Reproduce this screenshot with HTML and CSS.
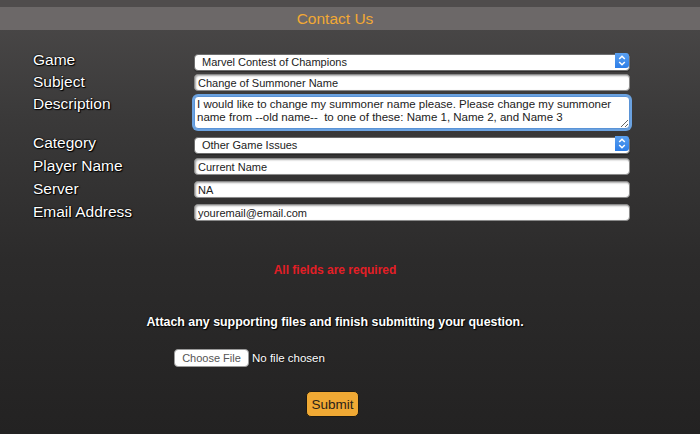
FILE: index.html
```html
<!DOCTYPE html>
<html lang="en">
<head>
    <meta charset="UTF-8">
    <title>Contact Us</title>
    <link rel="stylesheet" href="styles.css">
</head>
<body>
    <div class="top-band"></div>
    <h1 class="page-title">Contact Us</h1>

    <form class="contact-form">
        <div class="form-grid">
            <label class="field-label">Game</label>
            <div class="select-wrap">
                <select class="field field-select">
                    <option>Marvel Contest of Champions</option>
                </select>
                <span class="select-arrow">
                    <svg width="8" height="11" viewBox="0 0 8 11"><path d="M1.2 4 L4 1.3 L6.8 4 M1.2 7 L4 9.7 L6.8 7" fill="none" stroke="#fff" stroke-width="1.5"/></svg>
                </span>
            </div>

            <label class="field-label">Subject</label>
            <input class="field field-text" type="text" value="Change of Summoner Name">

            <label class="field-label">Description</label>
            <textarea class="field field-area">I would like to change my summoner name please. Please change my summoner name from --old name--  to one of these: Name 1, Name 2, and Name 3</textarea>

            <label class="field-label">Category</label>
            <div class="select-wrap">
                <select class="field field-select">
                    <option>Other Game Issues</option>
                </select>
                <span class="select-arrow">
                    <svg width="8" height="11" viewBox="0 0 8 11"><path d="M1.2 4 L4 1.3 L6.8 4 M1.2 7 L4 9.7 L6.8 7" fill="none" stroke="#fff" stroke-width="1.5"/></svg>
                </span>
            </div>

            <label class="field-label">Player Name</label>
            <input class="field field-text" type="text" value="Current Name">

            <label class="field-label">Server</label>
            <input class="field field-text" type="text" value="NA">

            <label class="field-label">Email Address</label>
            <input class="field field-text" type="text" value="youremail@email.com">
        </div>

        <p class="required-note">All fields are required</p>

        <p class="attach-note">Attach any supporting files and finish submitting your question.</p>

        <div class="file-row">
            <button type="button" class="file-button">Choose File</button>
            <span class="file-status">No file chosen</span>
        </div>

        <div class="submit-row">
            <button type="button" class="submit-button">Submit</button>
        </div>
    </form>
</body>
</html>
```

FILE: styles.css
```css
html { background: #242323; }
body {
    margin: 0;
    min-height: 434px;
    font-family: "Liberation Sans", Arial, sans-serif;
    color: #fff;
    background: linear-gradient(to bottom, #4c4a4a 0px, #3a3939 120px, #2c2b2b 260px, #232222 434px);
}
.top-band { height: 7px; background: #4f4c4c; }
.page-title {
    margin: 0;
    height: 23px;
    line-height: 23px;
    background: #6c6868;
    color: #f2a934;
    font-size: 15.5px;
    font-weight: normal;
    text-align: center;
    padding-right: 30px;
}

.contact-form { padding-top: 22px; }
.form-grid {
    display: grid;
    grid-template-columns: 161px 436px;
    grid-template-rows: 22px 22px 39px 23px 23px 23px 17px;
    padding-left: 33px;
    align-items: start;
}
.field-label {
    font-size: 15.5px;
    line-height: 15px;
    text-shadow: 0 0 2px #000, 1px 1px 1px #000, 0 0 1px #000;
}

.field {
    box-sizing: border-box;
    width: 100%;
    margin: 0;
    background: #fff;
    color: #222;
    font-family: "Liberation Sans", Arial, sans-serif;
    border: 1px solid #8a8a8a;
    border-radius: 4px;
    outline: none;
}
.field-text {
    height: 17px;
    font-size: 11px;
    padding: 0 3px;
    box-shadow: inset 1px 1px 2px rgba(0,0,0,0.35);
}
.field-area {
    height: 33px;
    font-size: 11.5px;
    line-height: 13px;
    padding: 1px 2px;
    resize: vertical;
    border: 1px solid #5a93d6;
    box-shadow: 0 0 0 2px #6ba2e0;
    overflow: hidden;
}
.select-wrap { position: relative; height: 17px; }
.field-select {
    appearance: none;
    -webkit-appearance: none;
    height: 17px;
    font-size: 11px;
    padding: 0 0 0 7px;
    border: 1px solid #6e6e6e;
    box-shadow: 0 1px 1px rgba(0,0,0,0.3);
}
.select-arrow {
    position: absolute;
    right: 1px;
    top: 1px;
    width: 14px;
    height: 15px;
    background: linear-gradient(#5aa0f0, #2d7ee8);
    border-radius: 0 3px 3px 0;
    display: flex;
    align-items: center;
    justify-content: center;
}

.required-note {
    margin: 42px 0 0;
    text-align: center;
    color: #e41e26;
    font-size: 12px;
    font-weight: bold;
    padding-right: 30px;
}
.attach-note {
    margin: 38px 0 0;
    text-align: center;
    font-size: 12.4px;
    font-weight: bold;
    padding-right: 30px;
    text-shadow: 0 0 2px #000, 1px 1px 1px #000;
}
.file-row {
    display: flex;
    align-items: center;
    margin-top: 20px;
    padding-left: 174px;
}
.file-button {
    box-sizing: border-box;
    height: 18px;
    width: 75px;
    padding: 0;
    background: #fff;
    border: 1px solid #9a9a9a;
    border-radius: 4px;
    color: #555;
    font-family: "Liberation Sans", Arial, sans-serif;
    font-size: 11px;
}
.file-status {
    margin-left: 3px;
    font-size: 11.5px;
    text-shadow: 0 0 2px #000;
}
.submit-row {
    margin-top: 24px;
    padding-left: 306px;
}
.submit-button {
    box-sizing: border-box;
    width: 53px;
    height: 26px;
    padding: 0;
    background: #f0a934;
    border: 1px solid #1e1a12;
    border-radius: 5px;
    color: #2a2218;
    font-family: "Liberation Sans", Arial, sans-serif;
    font-size: 13.5px;
}
```
